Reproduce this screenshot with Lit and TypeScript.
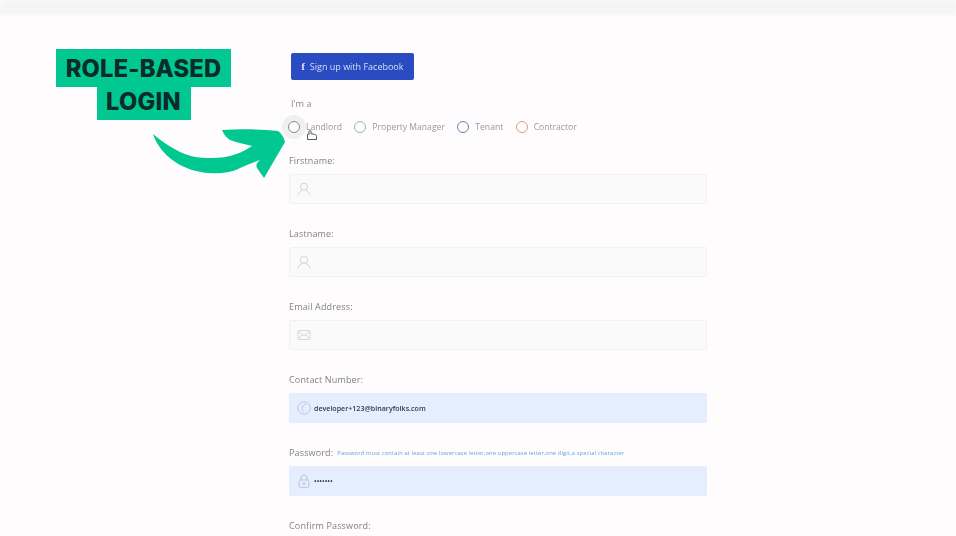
import { LitElement, html, css, svg } from "lit";
import { customElement } from "lit/decorators.js";

const user = svg`<circle cx="7" cy="4.8" r="3.6"/><path d="M1 13.500c.4-3 2.400-4.500 4.300-5M13 13.500c-.4-3-2.400-4.500-4.300-5"/>`;
const mail = svg`<rect x="1" y="2.500" width="12" height="9" rx="1.400"/><path d="M1.500 3.500 7 7.800l5.500-4.300M1.500 10.500 5.400 6.600M12.500 10.500 8.600 6.600"/>`;
const phone = svg`<circle cx="7" cy="7" r="6.200"/><path d="M9 3.400C6.600 3.600 5 5.400 5 7.600c0 1.400.6 2.400 1.400 3.100"/>`;
const lock = svg`<rect x="2.200" y="6" width="9.600" height="7.600" rx="1.400"/><path d="M4 6V4a3 3 0 0 1 6 0v2"/><circle cx="7" cy="9.600" r="1"/>`;

@customElement("app-root")
export class AppRoot extends LitElement {
  static styles = css`
    :host {
      display: block;
      position: relative;
      width: 956px;
      height: 536px;
      overflow: hidden;
      background: #fefcfd;
      font-family: "Open Sans", "Liberation Sans", sans-serif;
    }
    .topbar {
      height: 16px;
      background: linear-gradient(#f7f5f6, #f4f5f6 70%, #fbfafb);
      filter: blur(1px);
    }
    .form {
      width: 418px;
      margin-left: 289px;
      padding-top: 37px;
      display: flex;
      flex-direction: column;
      filter: blur(0.55px);
    }
    .fb {
      width: 123px;
      height: 27px;
      margin-left: 2px;
      box-sizing: border-box;
      border-radius: 2px;
      background: #2a4cc0;
      color: #d6def6;
      font-size: 9px;
      display: flex;
      align-items: center;
      justify-content: center;
      gap: 5px;
    }
    .fb b { font-family: "Liberation Serif", serif; font-size: 10px; color: #eef; }
    .ima {
      margin: 18px 0 0 2px;
      height: 12px;
      line-height: 12px;
      font-size: 9.200px;
      color: #8a8a8c;
    }
    .roles {
      margin: 10px 0 0 -1px;
      height: 14px;
      display: flex;
      align-items: center;
      font-size: 8.600px;
      color: #97999b;
    }
    .role { display: flex; align-items: center; gap: 6px; margin-right: 12.400px; }
    .dot {
      width: 12px;
      height: 12px;
      border-radius: 50%;
      border: 1.600px solid;
      box-sizing: border-box;
      flex: none;
    }
    .halo {
      box-shadow: 0 0 0 6px #f1f0f1;
      border-color: #85878a;
    }
    .green { border-color: #96bb9c; }
    .blue { border-color: #6f7fb0; }
    .orange { border-color: #dc9a86; }
    .field { display: flex; flex-direction: column; height: 73px; }
    .field .lab {
      height: 14px;
      line-height: 14px;
      font-size: 9px;
      letter-spacing: 0.150px;
      color: #808184;
      display: flex;
      align-items: center;
      gap: 4px;
    }
    .hint { font-size: 5.800px; letter-spacing: 0.120px; color: #6d9fd6; }
    .box {
      margin-top: 6px;
      height: 30px;
      box-sizing: border-box;
      border: 1px solid #f1f1f1;
      border-radius: 2px;
      background: #fafafa;
      display: flex;
      align-items: center;
      gap: 3px;
      padding-left: 7px;
      font-size: 7.100px;
      font-weight: 600;
      color: #33384a;
    }
    .box.filled { background: #e5eefe; border-color: #e5eefe; }
    .box svg {
      width: 14px;
      height: 14px;
      fill: none;
      stroke: #d3d4d5;
      stroke-width: 1;
      flex: none;
    }
    .box.filled svg { stroke: #bcc5d8; }
    .first { margin-top: 20px; }
    .banner {
      position: absolute;
      left: 56px;
      top: 49px;
      width: 175px;
      display: flex;
      flex-direction: column;
      align-items: center;
      font-family: Inter, "Liberation Sans", sans-serif;
      font-weight: 800;
      font-size: 23.700px;
      letter-spacing: 0.200px;
      color: #0b2b2b;
    }
    .banner span {
      background: #00c890;
      display: flex;
      align-items: center;
      justify-content: center;
      box-sizing: border-box;
    }
    .l1 { width: 175px; height: 38px; }
    .l2 { width: 94px; height: 33px; padding-bottom: 5px; }
    .overlay { position: absolute; left: 0; top: 0; pointer-events: none; }
    .hand { fill: #fff; stroke: #55585c; stroke-width: 1; }
  `;

  private field(label: string, icon: unknown, value = "", filled = false, hint = "", first = false) {
    return html`<div class="field ${first ? "first" : ""}">
      <div class="lab">${label}${hint ? html`<span class="hint">${hint}</span>` : ""}</div>
      <div class="box ${filled ? "filled" : ""}">
        <svg viewBox="0 0 14 14">${icon}</svg><span>${value}</span>
      </div>
    </div>`;
  }

  render() {
    return html`
      <div class="topbar"></div>
      <div class="form">
        <div class="fb"><b>f</b><span>Sign up with Facebook</span></div>
        <div class="ima">I'm a</div>
        <div class="roles">
          <div class="role"><i class="dot halo"></i>Landlord</div>
          <div class="role"><i class="dot green"></i>Property Manager</div>
          <div class="role"><i class="dot blue"></i>Tenant</div>
          <div class="role"><i class="dot orange"></i>Contractor</div>
        </div>
        ${this.field("Firstname:", user, "", false, "", true)}
        ${this.field("Lastname:", user)}
        ${this.field("Email Address:", mail)}
        ${this.field("Contact Number:", phone, "developer+123@binaryfolks.com", true)}
        ${this.field("Password:", lock, "•••••••", true, "Password must contain at least one lowercase letter,one uppercase letter,one digit,a special character")}
        ${this.field("Confirm Password:", lock)}
      </div>
      <div class="banner">
        <span class="l1">ROLE-BASED</span>
        <span class="l2">LOGIN</span>
      </div>
      <svg class="overlay" width="956" height="536" viewBox="0 0 956 536">
        <path fill="#00c890" d="M153 134C158 150 173 163 187 168C200 174 226 176 240 168C247 165 254 162 260 160C256 163 256 166 257 168L264 178L285 142C284 137 281 133 278 131C262 129 240 129 222 130C224 135 227 138 230 140C238 143 246 144 252 146C244 151 238 154 230 156C222 158 214 158 207 158C196 158 187 155 180 152C170 147 161 141 153 134Z"/>
        <path class="hand" d="M307.500 139.500V134.500c0-1 1.500-1 1.500 0V131.500c0-1.300 2-1.300 2 0v2.200l3.500.6c1.500.3 2 1 2 2.200v3z"/>
      </svg>
    `;
  }
}
